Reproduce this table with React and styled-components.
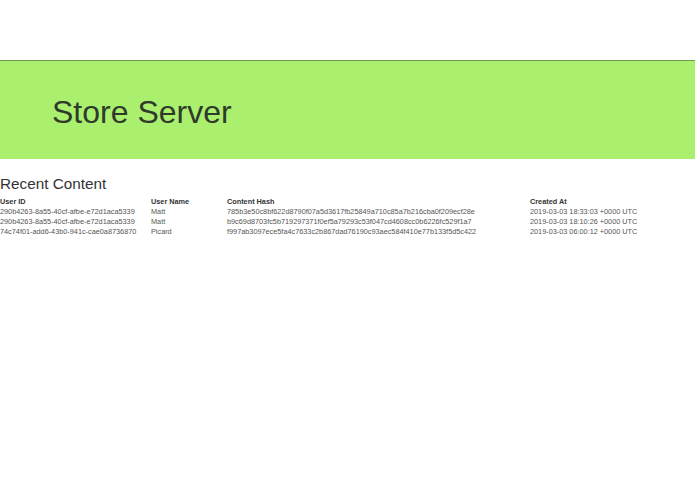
import React from "react";
import styled, { createGlobalStyle } from "styled-components";

const GlobalStyle = createGlobalStyle`
  html, body { margin: 0; padding: 0; background: #fff; }
  body { font-family: "Liberation Sans", Arial, sans-serif; }
`;

const TopBar = styled.div`
  height: 60px;
`;

const Banner = styled.header`
  border-top: 1px solid #6d9a4f;
  background: #aaf06e;
  height: 98px;
  display: flex;
  align-items: center;
  padding-left: 52px;
`;

const Title = styled.h1`
  margin: 0;
  font-size: 32px;
  font-weight: 400;
  color: #2f3a2b;
  line-height: 1;
  padding-top: 4px;
`;

const Section = styled.section`
  padding: 0;
`;

const SectionTitle = styled.h2`
  margin: 16px 0 5px;
  font-size: 15.3px;
  font-weight: 400;
  line-height: 17px;
  color: #333;
`;

const Table = styled.table`
  border-collapse: collapse;
  table-layout: fixed;
  width: 695px;
  font-size: 7.3px;
  line-height: 10px;
`;

const Th = styled.th`
  text-align: left;
  font-weight: 700;
  color: #333;
  padding: 0;
  white-space: nowrap;
`;

const Td = styled.td`
  color: #555;
  padding: 0;
  white-space: nowrap;
`;

const rows = [
  ["290b4263-8a55-40cf-afbe-e72d1aca5339", "Matt", "785b3e50c8bf622d8790f07a5d3617fb25849a710c85a7b216cba0f209ecf28e", "2019-03-03 18:33:03 +0000 UTC"],
  ["290b4263-8a55-40cf-afbe-e72d1aca5339", "Matt", "b9c69d8703fc5b719297371f0ef5a79293c53f047cd4608cc0b6226fc529f1a7", "2019-03-03 18:10:26 +0000 UTC"],
  ["74c74f01-add6-43b0-941c-cae0a8736870", "Picard", "f997ab3097ece5fa4c7633c2b867dad76190c93aec584f410e77b133f5d5c422", "2019-03-03 06:00:12 +0000 UTC"],
];

export default function App() {
  return (
    <>
      <GlobalStyle />
      <TopBar />
      <Banner>
        <Title>Store Server</Title>
      </Banner>
      <Section>
        <SectionTitle>Recent Content</SectionTitle>
        <Table>
          <colgroup>
            <col style={{ width: 151 }} />
            <col style={{ width: 76 }} />
            <col style={{ width: 303 }} />
            <col />
          </colgroup>
          <thead>
            <tr>
              <Th>User ID</Th>
              <Th>User Name</Th>
              <Th>Content Hash</Th>
              <Th>Created At</Th>
            </tr>
          </thead>
          <tbody>
            {rows.map((r, i) => (
              <tr key={i}>
                {r.map((c, j) => (
                  <Td key={j}>{c}</Td>
                ))}
              </tr>
            ))}
          </tbody>
        </Table>
      </Section>
    </>
  );
}
